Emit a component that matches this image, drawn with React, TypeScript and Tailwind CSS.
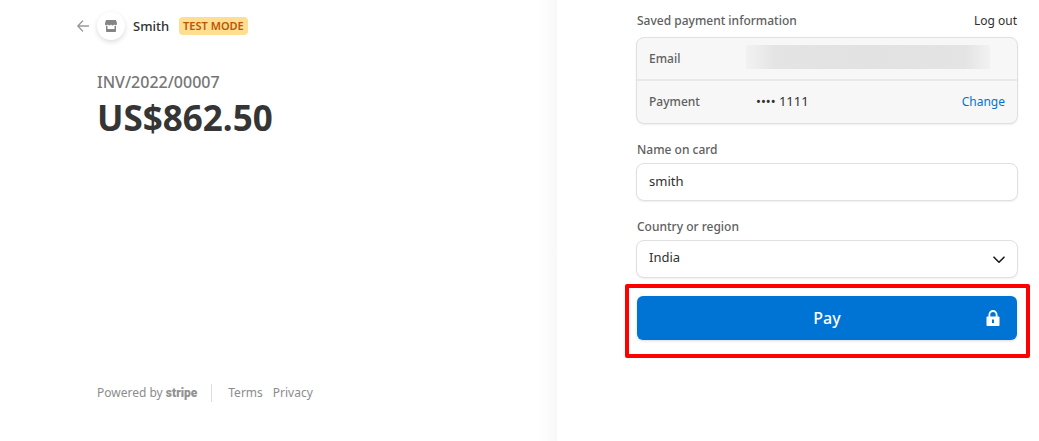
import type { ReactNode } from "react";

function BackArrow() {
  return (
    <svg viewBox="0 0 12 12" className="size-3" fill="none" stroke="#999999" strokeWidth="1.3" strokeLinecap="round" strokeLinejoin="round" aria-hidden="true">
      <path d="M5.6 1 .8 6l4.8 5M1 6h10.5" />
    </svg>
  );
}

function StoreIcon() {
  return (
    <svg viewBox="0 0 12 12" className="size-3" fill="#858585" aria-hidden="true">
      <path d="M1 0h10v1H1z" />
      <path d="M.5 1h11l.5 2.800c0 .8-.5 1.400-1.300 1.400S9.300 4.900 9.200 4.200c-.1.700-.7 1.200-1.600 1.200S6.100 4.900 6 4.200c-.1.700-.7 1.200-1.600 1.200S2.900 4.900 2.800 4.200c-.1.700-.700 1.200-1.500 1.200S0 4.800 0 4z" />
      <path d="M1 6h1.500v3h7V6H11v5c0 .6-.4 1-1 1H2c-.6 0-1-.4-1-1z" />
    </svg>
  );
}

function LockIcon() {
  return (
    <svg viewBox="0 0 14 16" className="h-4 w-3.5" aria-hidden="true">
      <path d="M3.400 8V4.600a3.600 3.600 0 0 1 7.200 0V8" fill="none" stroke="#fff" strokeWidth="1.800" />
      <path fill="#fff" fillRule="evenodd" d="M1.500 6.500h11c.6 0 1 .4 1 1V15c0 .6-.4 1-1 1h-11c-.6 0-1-.4-1-1V7.500c0-.6.4-1 1-1zM6 9.600v3.300h2V9.600z" />
    </svg>
  );
}

function Field({ id, label, children }: { id: string; label: string; children: ReactNode }) {
  return (
    <div className="flex flex-col gap-[3px]">
      <label htmlFor={id} className="px-px text-xs leading-5 font-medium text-[#606060]">
        {label}
      </label>
      {children}
    </div>
  );
}

const controlClass =
  "block h-[38px] w-full appearance-none rounded-lg border border-[#e0e0e0] bg-white px-3 pb-0.5 text-[13px] text-[#303030] shadow-[0_1px_2px_rgba(0,0,0,0.07)] outline-none";

export default function App() {
  return (
    <div className="grid min-h-screen grid-cols-[557fr_482fr] bg-white font-['Noto_Sans',sans-serif] text-[#303030]">
      <section className="flex flex-col justify-between bg-[linear-gradient(to_left,#f8f8f8,#ffffff_18px)] pt-3 pb-[39px] pl-[77px]">
        <div>
          <header className="flex items-center">
            <a href="#back" aria-label="Back">
              <BackArrow />
            </a>
            <span className="ml-2 flex size-7 items-center justify-center rounded-full bg-white shadow-[0_2px_5px_rgba(0,0,0,0.14)]">
              <StoreIcon />
            </span>
            <span className="ml-2 text-[13px] leading-5 font-medium">Smith</span>
            <span className="ml-2.5 rounded bg-[#ffde92] px-1 text-[11px] leading-[18px] font-semibold text-[#bb5504]">TEST MODE</span>
          </header>
          <div className="mt-8 pl-5">
            <p className="text-base leading-5 font-medium text-[#767676]">INV/2022/00007</p>
            <h1 className="mt-1 text-[35px] leading-[44px] font-bold text-[#353535]">US$862.50</h1>
          </div>
        </div>
        <footer className="flex items-center pl-5 text-xs leading-[18px] text-[#8c8c8c]">
          <span>
            Powered by <b className="font-['Roboto',sans-serif] font-black text-[#929292]">stripe</b>
          </span>
          <span className="ml-3.5 h-[18px] border-l border-[#dedede]" />
          <a href="#terms" className="ml-4">Terms</a>
          <a href="#privacy" className="ml-2.5">Privacy</a>
        </footer>
      </section>

      <main className="pt-[11px] pr-[21px] pl-[79px]">
        <div className="flex items-center justify-between px-px text-xs leading-5">
          <h2 className="font-medium text-[#606060]">Saved payment information</h2>
          <button type="button">Log out</button>
        </div>

        <dl className="mt-1.5 rounded-lg border border-[#e0e0e0] bg-[#f7f7f7] text-xs shadow-[0_1px_2px_rgba(0,0,0,0.07)]">
          <div className="flex h-[43px] items-center border-b-2 border-[#e9e9e9] px-3">
            <dt className="w-[97px] font-medium text-[#606060]">Email</dt>
            <dd className="mr-[15px] mb-1 h-6 flex-1 bg-[linear-gradient(to_right,#f2f2f2,#e4e4e4_12%,#e2e2e2_50%,#e4e4e4_90%,#f2f2f2)]" aria-label="Hidden email address" />
          </div>
          <div className="flex h-[42px] items-center px-3">
            <dt className="w-[107px] font-medium text-[#606060]">Payment</dt>
            <dd className="flex flex-1 items-center justify-between">
              <span className="text-[13px]">•••• 1111</span>
              <button type="button" className="text-[#0074d4]">Change</button>
            </dd>
          </div>
        </dl>

        <form className="mt-4 flex flex-col gap-4" onSubmit={(event) => event.preventDefault()}>
          <Field id="card-name" label="Name on card">
            <input id="card-name" type="text" defaultValue="smith" className={controlClass} />
          </Field>
          <Field id="country" label="Country or region">
            <div className="relative">
              <select id="country" defaultValue="India" className={controlClass}>
                <option>India</option>
              </select>
              <svg viewBox="0 0 12 8" className="pointer-events-none absolute top-4 right-[13px] h-2 w-3" fill="none" stroke="#1a1a1a" strokeWidth="1.6" strokeLinecap="round" strokeLinejoin="round" aria-hidden="true">
                <path d="m1 1.200 5 5 5-5" />
              </svg>
            </div>
          </Field>
          <div className="relative mx-px mt-0.5">
            <button
              type="submit"
              className="flex h-11 w-full items-center rounded-md bg-[#0074d4] px-[17px] text-base font-medium text-white shadow-[0_1px_3px_rgba(0,0,0,0.15)]"
            >
              <span className="flex-1 pl-3.5 text-center">Pay</span>
              <LockIcon />
            </button>
            <span className="pointer-events-none absolute -top-3 -right-[13px] -bottom-[18px] -left-3 rounded-xs border-4 border-[#ff0000]" />
          </div>
        </form>
      </main>
    </div>
  );
}
